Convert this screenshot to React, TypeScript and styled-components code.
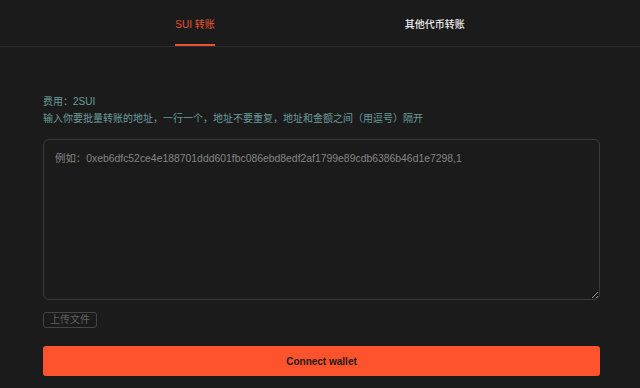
import React, { useState } from 'react';
import styled, { createGlobalStyle } from 'styled-components';

const GlobalStyle = createGlobalStyle`
  html, body {
    margin: 0;
    padding: 0;
    background: #1b1b1b;
  }
  body {
    font-family: "Liberation Sans", "Noto Sans CJK SC", sans-serif;
    color: #e6e6e6;
  }
  * {
    box-sizing: border-box;
  }
`;

const Page = styled.div`
  width: 640px;
  height: 388px;
  background: #1b1b1b;
  overflow: hidden;
`;

const TabBar = styled.div`
  height: 47px;
  display: flex;
  justify-content: center;
  gap: 190px;
  border-bottom: 1px solid #2c2c2c;
`;

const Tab = styled.div<{ $active?: boolean }>`
  position: relative;
  height: 46px;
  display: flex;
  align-items: center;
  font-size: 10px;
  font-weight: ${(p) => (p.$active ? 400 : 500)};
  color: ${(p) => (p.$active ? '#e8512f' : '#ececec')};
  cursor: pointer;
  &::after {
    content: '';
    display: ${(p) => (p.$active ? 'block' : 'none')};
    position: absolute;
    left: 0;
    right: 0;
    bottom: 0;
    height: 2px;
    background: #e8512f;
  }
`;

const Content = styled.div`
  padding: 46px 40px 0 43px;
  display: flex;
  flex-direction: column;
`;

const Hint = styled.div`
  font-size: 10px;
  line-height: 17px;
  color: #6a9d9b;
`;

const AddressInput = styled.textarea`
  margin-top: 12px;
  width: 557px;
  height: 161px;
  padding: 11px 11px;
  background: #1b1b1b;
  border: 1px solid #3b3b3b;
  border-radius: 6px;
  color: #cfcfcf;
  font-family: "Liberation Sans", "Noto Sans CJK SC", sans-serif;
  font-size: 10.4px;
  line-height: 15px;
  outline: none;
  resize: vertical;
  &::placeholder {
    color: #858585;
  }
`;

const UploadButton = styled.button`
  margin-top: 12px;
  align-self: flex-start;
  height: 16px;
  padding: 0 6px;
  background: transparent;
  border: 1px solid #454545;
  border-radius: 3px;
  color: #626262;
  font-family: "Liberation Sans", "Noto Sans CJK SC", sans-serif;
  font-size: 10px;
  line-height: 14px;
  cursor: pointer;
`;

const ConnectButton = styled.button`
  margin-top: 18px;
  width: 557px;
  height: 30px;
  background: #fe532d;
  border: none;
  border-radius: 3px;
  color: #1b1b1b;
  font-family: "Liberation Sans", "Noto Sans CJK SC", sans-serif;
  font-size: 10px;
  font-weight: 700;
  cursor: pointer;
`;

const tabs = ['SUI 转账', '其他代币转账'];

const App: React.FC = () => {
  const [active, setActive] = useState(0);
  return (
    <Page>
      <GlobalStyle />
      <TabBar>
        {tabs.map((t, i) => (
          <Tab key={t} $active={i === active} onClick={() => setActive(i)}>
            {t}
          </Tab>
        ))}
      </TabBar>
      <Content>
        <Hint>费用：2SUI</Hint>
        <Hint>输入你要批量转账的地址，一行一个，地址不要重复，地址和金额之间（用逗号）隔开</Hint>
        <AddressInput placeholder="例如：0xeb6dfc52ce4e188701ddd601fbc086ebd8edf2af1799e89cdb6386b46d1e7298,1" />
        <UploadButton>上传文件</UploadButton>
        <ConnectButton>Connect wallet</ConnectButton>
      </Content>
    </Page>
  );
};

export default App;
